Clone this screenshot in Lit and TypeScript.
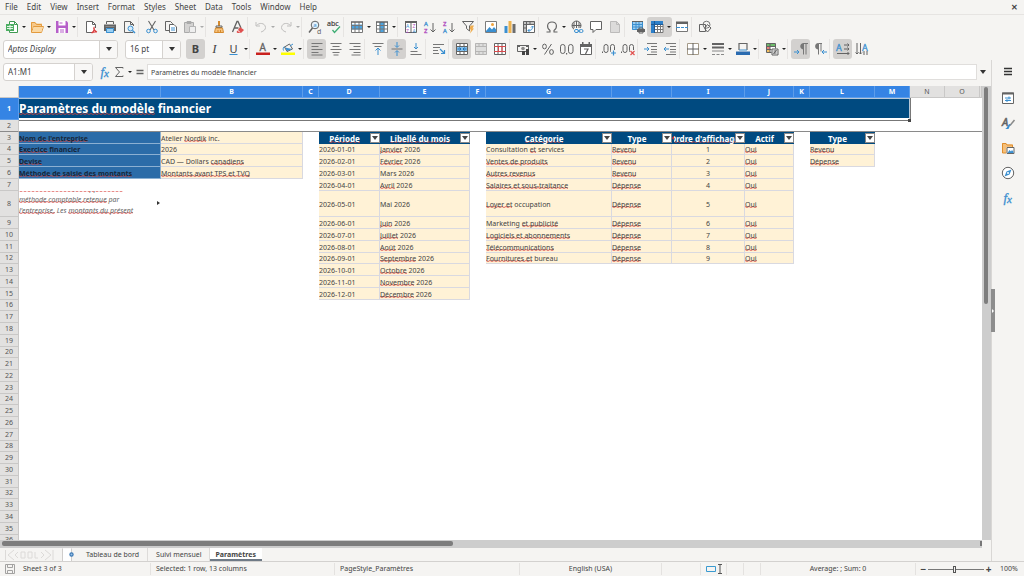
import { LitElement, html, svg, css, nothing } from "lit";
import { customElement, property, state } from "lit/decorators.js";
import { classMap } from "lit/directives/class-map.js";

const K = "#636363";
const B = "#3a8fd0";
const line = (d: string, c = K, w = 1) =>
  svg`<path d=${d} fill="none" stroke=${c} stroke-width=${w} />`;
const fill = (d: string, c = K) => svg`<path d=${d} fill=${c} />`;

const tableGrid = (c = "#777") => svg`${line("M1.5 2v10.500h11V2M1.500 5.500h11M1.500 9h11M5 2v10M9 2v10", c)}`;

const ICONS: Record<string, unknown> = {
  "new": svg`${fill("M4 1h6l3 3v9H4z", "#fff")}${line("M4.500 4V1.500h5l3 3v8h-8V11M9.500 1.500v3h3", "#3f9a52")}${fill("M1 4h8v7H1z", "#4cae62")}${line("M2 6.500h6M2 8.500h6M5 5v5", "#e6f6e9")}`,
  open: svg`${fill("M1 2h4l1.500 1.500H12V7H3l-2 5z", "#f7c98a")}${line("M1.500 12V2.500h3.500l1.500 2h5V6.500M1.500 12.500l2-6h10l-2 6z", "#e39b3e")}${fill("M3.800 7h9l-1.700 5H2.200z", "#fbd9a4")}`,
  save: svg`${fill("M1 1h10.500L13 2.500V13H1z", "#b65fc9")}${fill("M3.500 1h7v4.500h-7zM3.500 8h7v5h-7z", "#fff")}${line("M5 10h4M5 12h4M4.500 3h3", "#b65fc9")}`,
  pdf: svg`${fill("M2.500 1h6l3 3v9h-9z", "#fff")}${line("M8 12.500H2.500v-11h6l3 3V8M8.500 1.500v3h3")}${line("M7.500 13c2-1.500 3-4 2.500-5.500-1 1.500 1.500 4 3 4.500-2-.5-4 0-5.500 1", "#d93a3a", 1.200)}`,
  print: svg`${line("M3.500 4V1.500h7V4")}${fill("M1 4.500h12V11H1z")}${fill("M3 8h8v5H3z", "#9bd0f2")}${line("M3.500 8.500h7v4h-7z", B)}${line("M2.500 6.500h9", "#8a8a8a")}`,
  preview: svg`${line("M11 12.500H2.500v-11h6l3 3V6M8.500 1.500v3h3")}<circle cx="8.500" cy="8.500" r="2.500" fill="#d6ecfb" stroke=${B} />${line("M10.500 10.500l2.500 2.500", B, 1.500)}`,
  cut: svg`${line("M3.500 1l5.500 9M10.500 1L5 10", K, 1.1)}<circle cx="3.500" cy="11" r="1.800" fill="none" stroke=${B} /><circle cx="10.500" cy="11" r="1.800" fill="none" stroke=${B} />`,
  copy: svg`${line("M5 10.500H1.500v-9h5l2 2V4")}${fill("M5 4h5l3 3v6H5z", "#fff")}${line("M5.500 4.500h4.500l2.500 2.500v5.500h-7z")}${line("M7 8h4M7 10h4", B)}`,
  paste: svg`${fill("M1.500 2.500h9v10h-9z", "#d4d3d2")}${line("M1.500 2.500h9v10h-9zM4 1.500h4v2H4z", "#aaa")}${fill("M6 6h7v7H6z", "#eee")}${line("M6.500 6.500h6v6h-6z", "#b4b4b4")}`,
  clone: svg`${line("M7 1v5", "#d58a2e", 2)}${line("M4 7.500V6h6v1.500z")}${fill("M3.500 8h7l1 5h-9z", "#f6c27c")}${line("M3.500 8h7l1 4.500h-9zM6 10v2M8.500 10v2", "#d58a2e")}`,
  clear: svg`${line("M1.500 12L6 1.500h1L10 8M3.500 8h4", K, 1.3)}${fill("M9 7l4 3-3 3H6.500L5.500 12z", "#e0504f")}${line("M6 9.500l3 3", "#fff")}`,
  undo: svg`${line("M2 2v4h4M2.500 5.500C5 2.500 11 2.500 11.500 7.500c0 2-1.500 3.500-4.500 4.500", "#c0bfbe")}`,
  redo: svg`${line("M12 2v4H8M11.500 5.500C9 2.500 3 2.500 2.500 7.500c0 2 1.500 3.500 4.500 4.500", "#c0bfbe")}`,
  find: svg`<circle cx="7" cy="5" r="3.800" fill="#e4f2fc" stroke=${K} />${line("M4.500 8L1 12.500", K, 1.500)}<text x="5.200" y="7" font-size="6" fill=${B}>a</text><text x="9" y="13.500" font-size="7" fill=${K}>d</text>`,
  spell: svg`<text x="0" y="6" font-size="7" fill="#444" stroke="#444" stroke-width=".2">abc</text>${line("M5.500 10l2 2.500L13 6.500", "#3fae75", 1.3)}`,
  row: svg`${fill("M1 2h12v10H1z", "#fff")}${fill("M1 4.500h12v5H1z", "#4ba3e0")}${tableGrid()}${line("M1 2h12", K, 1.500)}`,
  col: svg`${fill("M1 2h12v10H1z", "#fff")}${fill("M4.500 2h5v10h-5z", "#4ba3e0")}${tableGrid()}${line("M1 2h12", K, 1.500)}`,
  sort: svg`${fill("M1 1h12v12H1z", "#fff")}${line("M1.500 1.500h11v11h-11z")}${fill("M1 1h12v2H1z")}<text x="2" y="7.500" font-size="5" fill=${B}>A</text><text x="2" y="12.500" font-size="5" fill="#b04fc0">Z</text><text x="8.500" y="7.500" font-size="5" fill="#b04fc0">Z</text><text x="8.500" y="12.500" font-size="5" fill=${B}>A</text>${line("M7 3v10")}`,
  asc: svg`<text x="1" y="6" font-size="6" fill=${B} stroke=${B} stroke-width=".3">A</text><text x="1" y="13" font-size="6" fill="#b04fc0" stroke="#b04fc0" stroke-width=".3">Z</text>${line("M10 3v9M7.500 9.500L10 12l2.500-2.500")}`,
  desc: svg`<text x="1" y="6" font-size="6" fill="#b04fc0" stroke="#b04fc0" stroke-width=".3">Z</text><text x="1" y="13" font-size="6" fill=${B} stroke=${B} stroke-width=".3">A</text>${line("M10 3v9M7.500 9.500L10 12l2.500-2.500")}`,
  filter: svg`${line("M1.500 1.500h11L8.500 6v5l-3-2.500V6z")}${fill("M9.500 5.500h3.500l-1.500 3h1.500l-4 5 1-4H8.500z", "#f0ad4e")}`,
  image: svg`${fill("M1 1h12v12H1z", "#fff")}${fill("M2 11l3.500-4L8 9.500l2-2.500 2.500 3v2.500H2z", B)}<circle cx="8.500" cy="4.500" r="1.500" fill="#f0a33c" />${line("M1.500 1.500h11v11h-11z", "#7c7c7c")}`,
  chart: svg`${fill("M1.500 6h3V13h-3z", B)}${fill("M5.500 1h3v12h-3z", "#eeb34f")}${fill("M9.500 4h3v9h-3z", "#6d6d6d")}`,
  pivot: svg`${fill("M1 1h12v12H1z", "#fff")}${fill("M1 1h12v3H1zM1 1h3v12H1z", "#c4c4c4")}${line("M1.500 1.500h11v11h-11zM4.500 1v12M1 4.500h12M8 1v3M1 8h3")}${line("M6 10.500c3.500 0 4.500-1 4.500-4M9 7.500l1.500-1.500L12 7.500M7.500 9L6 10.500 7.500 12", B)}`,
  omega: svg`${line("M1.500 12h3.500v-1.500C1.500 8 1.500 2 7 2s5.500 6 2 8.500V12h3.500", K, 1.100)}`,
  globe: svg`<circle cx="6.500" cy="5.500" r="4.500" fill="none" stroke=${K} />${line("M2 5.500h9M6.500 1v9M4 2v7M9 2v7")}${fill("M4 8h10v6H4z", "#f5f4f2")}<rect x="4.500" y="9.500" width="4" height="3" rx="1.500" fill="none" stroke=${B} /><rect x="9" y="9.500" width="4" height="3" rx="1.500" fill="none" stroke=${B} />${line("M7.500 11h3", B)}`,
  comment: svg`${fill("M1 1h12v9H1z", "#fff")}${line("M1.500 1.500h11v8H7L4 12.500v-3H1.500z")}`,
  page: svg`${fill("M2.500 1h6l3 3v9h-9z", "#dcdbda")}${line("M2.500 1.500h6l3 3v8h-9zM8.500 1.500v3h3", "#bcbbba")}`,
  headers: svg`${fill("M1 1h11v9H1z", "#9ccdf0")}${line("M1.500 1.500h10v8h-10zM1 4.500h11M1 7h11M5 1v9M8 1v9", B)}${line("M1 1.500h11")}${fill("M6 9h8v3H6z")}${line("M8 8h4v5H8z")}`,
  freeze: svg`${fill("M4 4h9v9H4z", "#fff")}${fill("M1 1h12v3H1zM1 1h3.500v12H1z", "#2c7fc9")}${line("M4 6.500h9M4 9.500h9M7.500 4v9M10.500 4v9M4 12.500h9V4", "#777")}${line("M1 4.500h12M4.500 1v12", "#1e5a96")}`,
  split: svg`${fill("M1 2h12v10H1z", "#fff")}${line("M1.500 2.500h11v9h-11z", "#777")}${fill("M1 1.500h12v2.500H1z")}${line("M1 7.500h4M6 7.500h3M10 7.500h3", B)}`,
  shapes: svg`${line("M1.500 4.500h6v7h-6zM6.500 8.500L9.500 4.500l3.500 3.500-3.500 4z")}<circle cx="8.500" cy="4.700" r="3.500" fill="none" stroke="#777" />`,
  fontcolor: svg`<text x="3.500" y="9" font-size="10" fill=${K} stroke=${K} stroke-width=".3">A</text>${fill("M0 10.500h14V13H0z", "#c9211e")}`,
  bucket: svg`${line("M3.500 5l5-3 3 5-5.500 2.500z")}${fill("M4 5.500l7 1.500-5 2z", B)}${line("M3.500 4.500C2 5 2 7.500 2.500 8.500M9 4l3-2", B)}${fill("M0 10.500h14V13H0z", "#ffff00")}`,
  left: svg`${line("M1.500 1.500h11M1.500 4.500h7M1.500 7.500h11M1.500 10.500h7M1.500 13h11", "#777")}`,
  center: svg`${line("M1.500 1.500h11M3.500 4.500h7M1.500 7.500h11M3.500 10.500h7M4.500 13h5", "#777")}`,
  right: svg`${line("M1.500 1.500h11M5.500 4.500h7M1.500 7.500h11M5.500 10.500h7M3.500 13h9", "#777")}`,
  top: svg`${line("M1.500 1.500h11M3.500 4.500h7", "#777")}${line("M7 13V6.500M4.500 8.500L7 6l2.500 2.500", B)}`,
  middle: svg`${line("M1.500 7h11", "#777")}${line("M7 0v5M5 3.500l2 2 2-2M7 14V9M5 10.500l2-2 2 2", B)}`,
  bottom: svg`${line("M1.500 9.500h7M1.500 12.500h11", "#777")}${line("M7 1v6M5 5l2 2 2-2", B)}`,
  wrap: svg`${line("M1 2.500h11M1 5.500h7M1 8.500h5M1 11.500h6", "#777")}${line("M8 7l4 4M12.500 8v3.500H9", B, 1.200)}`,
  merge: svg`${fill("M1 1h12v12H1z", "#fff")}${fill("M1 4h12v6H1z", "#86c2ee")}${line("M1.500 1.500h11v11h-11zM1 4.500h12M1 9.500h12M5 1v3M9 1v3M5 10v3M9 10v3")}${line("M2.500 7h3.500M8 7h3.500M4.500 5.500L6 7l-1.500 1.500M9.500 5.500L8 7l1.500 1.500", "#1e6fb5")}`,
  mergeoff: svg`${fill("M1 1h12v12H1z", "#dededd")}${line("M1.500 1.500h11v11h-11zM1 4.500h12M1 9.500h12M5 1v3M9 1v3M5 10v3M9 10v3", "#b6b5b4")}`,
  unmerge: svg`${fill("M1 1h12v12H1z", "#fff")}${line("M1.500 1.500h11v11h-11zM5 1v12M9 1v12")}${line("M1 4.500h12M1 9.500h12M5.500 4v6M9 4v6", "#d8494c")}`,
  currency: svg`${line("M1.500 3.500h11v6h-11z")}${fill("M1 3h3v2H1zM10 3h3v2h-3z")}<circle cx="7" cy="6.500" r="1.800" fill="#8a8a8a" />${fill("M6 9h3v4H6zM10 7h3v6h-3z", "#444")}`,
  percent: svg`${line("M10.500 2L3.500 12.500")}<ellipse cx="3.500" cy="4.500" rx="1.900" ry="2.400" fill="none" stroke=${K} /><ellipse cx="10.500" cy="10" rx="1.900" ry="2.400" fill="none" stroke=${K} />`,
  number: svg`<rect x=".5" y="2.500" width="4.500" height="9" rx="2.200" fill="none" stroke=${K} /><rect x="8.500" y="2.500" width="4.500" height="9" rx="2.200" fill="none" stroke=${K} />${fill("M6 11h1.200v1.500H6z")}`,
  date: svg`${fill("M1 2h12v11H1z", "#fff")}${line("M1.500 2.500h11v10h-11z")}${fill("M1 2h12v3H1zM3 0h1.500v2H3zM9.500 0H11v2H9.500z")}${line("M5 7h4l-2.500 5", K, 1.200)}`,
  decadd: svg`<rect x="2" y="2.500" width="4" height="8" rx="2" fill="none" stroke=${K} /><rect x="8.500" y="2.500" width="4" height="8" rx="2" fill="none" stroke=${K} />${fill("M0 9.500h1V11H0z")}${fill("M9 8h5v6H9z", "#f5f4f2")}${line("M9 11h5M11.500 8.500v5", B, 1.200)}`,
  decdel: svg`<rect x="2" y="2.500" width="4" height="8" rx="2" fill="none" stroke=${K} /><rect x="8.500" y="2.500" width="4" height="8" rx="2" fill="none" stroke=${K} />${fill("M0 9.500h1V11H0z")}${fill("M9 8h5v6H9z", "#f5f4f2")}${line("M9.500 9l4 4M13.500 9l-4 4", "#e0504f", 1.200)}`,
  indent: svg`${line("M3 1.500h10M7 4.500h6M7 7.500h6M7 10h6M3 12.500h10", "#777")}${line("M0 7h5M3 5l2 2-2 2", B)}`,
  outdent: svg`${line("M3 1.500h10M7 4.500h6M7 7.500h6M7 10h6M3 12.500h10", "#777")}${line("M6 7H1M3 5L1 7l2 2", B)}`,
  borders: svg`${fill("M1.500 1.500h11v11h-11z", "#fff")}${line("M1.500 1.500h11v11h-11z", "#a49a88")}${line("M7 1v12M1 7h12")}`,
  bstyle: svg`${line("M1 2h12", K, 2)}${line("M1 5.500h12", K, 2)}${line("M1 9h12", "#888")}${line("M1 12.500h3M5.500 12.500h3M10 12.500h3", "#888")}`,
  bcolor: svg`${line("M3 8V1.500h8V8", "#666", 1.200)}${line("M3 8h8", B)}${fill("M0 9.500h14V13H0z", "#2a6bb0")}`,
  cond: svg`${fill("M1 1h9v9H1z", "#fff")}${fill("M1 1h9v3H1z", "#6dbb6a")}${fill("M1 4h4v3H1z", "#e8817a")}${fill("M1 7h4v3H1z", "#f3c062")}${line("M1.500 1.500h9v9h-9zM1 4.500h10M1 7.500h10M5 1v10")}${fill("M6.500 6.500H13V13H6.500z", "#eee")}${line("M7 7h6v6H7zM8.500 9h3M8.500 11h3M11.500 8l-3 4")}`,
  ltr: svg`${line("M14 1.500H9.500v11M12 1.500v11", "#777")}${fill("M10 1v6.500C5 7.500 5 1 10 1z", "#777")}${line("M0 10h5M3 8l2 2-2 2", B)}`,
  rtl: svg`${line("M9 1.500H5.500v11M8 1.500v8", "#777")}${fill("M5.500 1v6.500C1 7.500 1 1 5.500 1z", "#777")}${line("M14 10H9M11 8L9 10l2 2", B)}`,
  horiz: svg`<text x="0" y="8.500" font-size="9" fill=${B} stroke=${B} stroke-width=".3">A</text>${line("M8 3h5M8 7h5M1 11.500h12M11.500 1.500L13 3l-1.500 1.500M11.500 5.500L13 7l-1.500 1.500M11.500 10l1.500 1.500-1.500 1.500")}`,
  vert: svg`<text x="7" y="8.500" font-size="9" fill=${B} stroke=${B} stroke-width=".3">A</text>${line("M2 1v11M5.500 1v11M9 9v4M12 9v4M.5 10.500L2 12l1.500-1.500M4 10.500L5.500 12 7 10.500")}`,
  fx: svg`<text x="2.500" y="11" font-size="13" font-style="italic" font-family="Liberation Serif, serif" fill=${B} stroke=${B} stroke-width=".3">f</text><text x="6" y="12" font-size="11" font-style="italic" font-family="Liberation Serif, serif" fill=${B} stroke=${B} stroke-width=".3">x</text>`,
  sigma: svg`${line("M11 3.500V2.500H3.500L7.500 7l-4 4.500H11v-1")}`,
  equals: svg`${line("M3.500 5.500h7M3.500 8.500h7", K, 1.300)}`,
  menu: svg`${line("M3 3.500h8M3 6.500h8M3 9.500h8", "#333", 1.300)}`,
  props: svg`${fill("M1 1.500h12v11H1z", "#fff")}${line("M1.500 2h11v10.500h-11z", "#666")}${line("M1 2.500h12", K, 2)}${line("M4 7h6M4 9.500h6M8 5.500v3M6 8v3", B)}`,
  styles: svg`<text x="1" y="10" font-size="11" font-style="italic" fill=${K} stroke=${K} stroke-width=".5">A</text>${line("M13.500 4L9 9.500", "#8a8a8a", 1.500)}${fill("M9.500 8.500l-2 4.500H4c2 0 2.500-4 4.500-5z", B)}`,
  gallery: svg`${fill("M1 2h4l1 1.500h6V12H1z", "#f6bf78")}${line("M1.500 12V2.500h3.500l1 1.500h5.500v2M1.500 12H5", "#df8d2d")}${fill("M5.500 6H13v7H5.500z", "#fff")}${line("M6 6.500h7v6H6z", "#666")}${fill("M6.500 12l2-3 1.500 1.500L11 9l1.500 2v1z", B)}`,
  navigator: svg`<circle cx="7" cy="7" r="5.700" fill="#fff" stroke=${K} />${fill("M10.500 3.500L8.500 8.500l-5 2 2-5z", B)}<circle cx="7" cy="7" r="1" fill="#fff" />`,
  disk: svg`${line("M2.500 2.500h9v9h-9zM4.500 2.500v3h5v-3M4.500 11.500v-3h5v3", "#a3a2a1")}`,
};

const icon = (name: string) =>
  html`<svg class="icon" viewBox="0 0 14 14" aria-hidden="true">${ICONS[name]}</svg>`;

/* "|" separates groups, "*" = has a drop-down, "+" = switched on, "-" = disabled */
const STANDARD = "new* open* save* | pdf print preview | cut copy paste*- | clone clear | undo*- redo*- | find spell | row* col* | sort asc desc filter | image chart pivot | omega* globe comment page- | headers freeze*+ split | shapes";
const FORMATTING = "bold+ italic underline* | fontcolor* bucket* | left+ center right | top middle+ bottom | wrap | merge+ mergeoff- unmerge | currency* percent number date | decadd decdel | indent outdent | borders* bstyle* bcolor* | cond* | ltr+ rtl | horiz+ vert";

const MENUS = ["File", "Edit", "View", "Insert", "Format", "Styles", "Sheet", "Data", "Tools", "Window", "Help"];
const COLS = "ABCDEFGHIJKLMNO".split("");
const WIDTHS = [19, 142, 142, 16, 61, 90, 16, 126, 60, 73, 49, 16, 65, 35, 35, 35];

type Cell = { text: string; kind: string };
const CELLS: Record<string, Cell> = {};
const put = (col: string, from: number, kind: string, texts: string[]) =>
  texts.forEach((text, i) => (CELLS[col + (from + i)] = { text, kind }));

/* words in braces are flagged by the spell checker */
put("A", 3, "label", ["{Nom de l'entreprise}", "{Exercice} financier", "{Devise}", "{Méthode de saisie des montants}"]);
put("B", 3, "value", ["Atelier {Nordik} inc.", "2026", "CAD — Dollars {canadiens}", "{Montants avant TPS et TVQ}"]);
put("A", 8, "note", ["{basée sur modèle, il suppose tous} — la {méthode comptable retenue} par {l'entreprise.} Les {montants du présent}"]);
put("D", 3, "head", ["{Période}"]);
put("D", 4, "value", Array.from({ length: 12 }, (_, i) => `2026-${String(i + 1).padStart(2, "0")}-01`));
put("E", 3, "head", ["{Libellé du mois}"]);
put("E", 4, "value", ["{Janvier} 2026", "{Février} 2026", "Mars 2026", "{Avril} 2026", "Mai 2026", "{Juin} 2026", "{Juillet} 2026", "{Août} 2026", "{Septembre} 2026", "{Octobre} 2026", "{Novembre} 2026", "{Décembre} 2026"]);
put("G", 3, "head", ["{Catégorie}"]);
put("G", 4, "value", ["Consultation {et} services", "{Ventes de produits}", "{Autres revenus}", "{Salaires et sous-traitance}", "{Loyer et} occupation", "Marketing {et publicité}", "{Logiciels et abonnements}", "{Télécommunications}", "{Fournitures et} bureau"]);
put("H", 3, "head", ["Type"]);
put("H", 4, "value", [..."RRRDDDDDD"].map((c) => (c === "R" ? "{Revenu}" : "{Dépense}")));
put("I", 3, "head", ["{Ordre d'affichage}"]);
put("I", 4, "number", [..."123456789"]);
put("J", 3, "head", ["Actif"]);
put("J", 4, "value", Array(9).fill("{Oui}"));
put("L", 3, "head", ["Type"]);
put("L", 4, "value", ["{Revenu}", "{Dépense}"]);

const marked = (text: string) =>
  text.split(/[{}]/).map((part, i) => (i % 2 ? html`<span class="misspelt">${part}</span>` : part));

const shared = css`
  * { box-sizing: border-box; }
  button, input {
    font: inherit;
    color: inherit;
    margin: 0;
    padding: 0;
    border: 0;
    background: none;
    border-radius: 0;
  }
  .icon { width: 14px; height: 14px; display: block; flex: none; overflow: visible; }
`;

@customElement("tool-bar")
class ToolBar extends LitElement {
  @property() items = "";
  static styles = [shared, css`
    :host { display: flex; align-items: center; }
    .sep { width: 4px; height: 20px; border-left: 1px solid #e6e4e2; }
    .tool { display: flex; align-items: center; height: 20px; border-radius: 3px; }
    .tool.on { background: #d3d1cf; }
    .tool button { display: grid; place-items: center; width: 19px; height: 20px; }
    .tool .more { width: 6px; }
    .more::before { content: ""; border: 2px solid transparent; border-top: 2px solid #222; border-bottom: 0; }
    .off .more::before { border-top-color: #aaa; }
    .letter { font-size: 11px; line-height: 14px; color: #444; }
    .bold { font-weight: 700; }
    .italic { font-family: "Liberation Serif", serif; font-style: italic; font-size: 13px; }
    .underline { text-decoration: underline; text-decoration-color: #3a8fd0; }
  `];
  render() {
    return this.items.split(" ").map((item) => {
      if (item === "|") return html`<span class="sep"></span>`;
      const name = item.replace(/[*+-]/g, "");
      const letter = ({ bold: "B", italic: "I", underline: "U" } as Record<string, string>)[name];
      const off = item.endsWith("-");
      return html`<span class=${classMap({ tool: true, on: item.endsWith("+"), off })}>
        <button aria-label=${name} ?disabled=${off}>
          ${letter ? html`<span class="letter ${name}">${letter}</span>` : icon(name)}
        </button>
        ${item.includes("*") ? html`<button class="more" aria-label="${name} options" ?disabled=${off}></button>` : nothing}
      </span>`;
    });
  }
}

@customElement("calc-grid")
class CalcGrid extends LitElement {
  static styles = [shared, css`
    :host { display: block; overflow: hidden; background: #fff; font-size: 7px; line-height: 10px; color: #444; }
    table { width: 100%; table-layout: fixed; border-collapse: separate; border-spacing: 0; }
    th, td { padding: 0; overflow: hidden; white-space: nowrap; text-align: left; vertical-align: middle; font-weight: 400; }
    thead tr { height: 12px; }
    tbody tr { height: 12px; }
    tbody tr.short { height: 11px; }
    tbody tr.title { height: 22px; }
    tbody tr.tall { height: 26px; }
    .axis {
      background: #e2e1e0;
      color: #555;
      text-align: center;
      border-right: 1px solid #c9c8c7;
      border-bottom: 1px solid #c9c8c7;
    }
    .axis.sel { background: #3584e4; color: #fff; font-weight: 700; border-color: #5c9dea; }
    .axis.corner { background: #f5f4f2; }
    .frozen .axis, .frozen td { border-bottom: 1px solid #8a8a8a; }
    .banner {
      position: relative;
      overflow: visible;
      background: #004a80;
      color: #fff;
      font-size: 12px;
      line-height: 16px;
      font-weight: 700;
      border: 1px solid #b8c8d8;
      border-left: 0;
      border-bottom: 2px solid #fff;
      box-shadow: 0 1px 0 #777, 1px 0 0 #777;
    }
    .handle { position: absolute; right: -2px; bottom: -4px; width: 3px; height: 3px; background: #444; }
    .value, .number, .label {
      line-height: 9px;
      padding-top: 1px;
      vertical-align: bottom;
      border-right: 1px solid #d9d9e0;
      border-bottom: 1px solid #d9d9e0;
    }
    .tall .value, .tall .number { vertical-align: middle; }
    .value, .number { background: #fff2d6; }
    .number { text-align: center; }
    .label { background: #2b6ca8; color: #17273a; font-weight: 700; border-color: #8bb0d2; }
    .head { background: #004a80; color: #fff; font-weight: 700; font-size: 8px; }
    .headbox { display: flex; align-items: center; height: 12px; }
    .headtext { flex: 1; display: flex; justify-content: center; overflow: hidden; min-width: 0; padding-top: 1px; }
    .headtext > span { flex: none; }
    .headbox button { flex: none; display: grid; place-items: center; width: 10px; height: 10px; background: #fff; border: 1px solid #888; }
    .headbox button::before { content: ""; border: 3px solid transparent; border-top: 4px solid #444; border-bottom: 0; }
    .cropped .headbox::before { content: ""; border: 2px solid transparent; border-right: 2px solid #e03030; border-left: 0; }
    .notebox {
      display: flex;
      align-items: flex-end;
      height: 26px;
      padding: 0 16px 1px 0;
      overflow: hidden;
      white-space: normal;
      font-style: italic;
      line-height: 11px;
      color: #666;
      position: relative;
    }
    .notebox::after {
      content: "";
      position: absolute;
      right: 1px;
      top: 10px;
      border: 2px solid transparent;
      border-left: 3px solid #333;
      border-right: 0;
    }
    .misspelt {
      background: url("data:image/svg+xml,%3Csvg xmlns='http://www.w3.org/2000/svg' width='4' height='2'%3E%3Cpath d='M0 .5L2 1.500L4 .5' fill='none' stroke='%23d8403c' stroke-opacity='.8'/%3E%3C/svg%3E") 0 calc(100% - 1px) / 4px 2px repeat-x;
    }
    .banner .misspelt { background-position-y: calc(100% - 2px); }
  `];
  private cell(ref: string) {
    const c = CELLS[ref];
    if (!c) return html`<td></td>`;
    if (c.kind === "head")
      return html`<td class=${classMap({ head: true, cropped: c.text.length > 17 })}><div class="headbox"><div class="headtext"><span>${marked(c.text)}</span></div><button aria-label="Filter"></button></div></td>`;
    if (c.kind === "note")
      return html`<td><div class="notebox"><span>${marked(c.text)}</span></div></td>`;
    return html`<td class=${c.kind}>${marked(c.text)}</td>`;
  }
  private row(n: number) {
    const cls = { title: n === 1, frozen: n === 2, tall: n === 8, short: n % 4 === 0 && n !== 8 };
    return html`<tr class=${classMap(cls)}>
      <th scope="row" class=${classMap({ axis: true, sel: n === 1 })}>${n}</th>
      ${n === 1
        ? html`<td class="banner" colspan="13"><span class="misspelt">Paramètres du modèle</span> financier<span class="handle"></span></td><td></td><td></td><td></td>`
        : html`${COLS.map((c) => this.cell(c + n))}<td></td>`}
    </tr>`;
  }
  render() {
    return html`<table>
      <colgroup>${WIDTHS.map((w) => html`<col style="width:${w}px" />`)}<col /></colgroup>
      <thead><tr>
        <td class="axis corner"></td>
        ${COLS.map((c, i) => html`<th scope="col" class=${classMap({ axis: true, sel: i < 13 })}>${c}</th>`)}
        <td class="axis"></td>
      </tr></thead>
      <tbody>${Array.from({ length: 36 }, (_, i) => this.row(i + 1))}</tbody>
    </table>`;
  }
}

@customElement("app-root")
class AppRoot extends LitElement {
  @state() private sheet = "Paramètres";
  static styles = [shared, css`
    :host {
      display: flex;
      flex-direction: column;
      height: 100vh;
      overflow: hidden;
      background: #f5f4f2;
      color: #444;
      font: 7px/10px "Noto Sans", "Open Sans", sans-serif;
    }
    .menubar { display: flex; align-items: center; height: 15px; padding-left: 1px; border-bottom: 1px solid #e6e4e2; }
    .menubar button { font-size: 8px; line-height: 14px; padding: 0 5px 0 4px; }
    .menubar .close { margin-left: auto; padding-right: 6px; font-weight: 700; }
    .standard { height: 23px; padding-left: 2px; }
    .formatting { display: flex; align-items: center; height: 22px; padding-left: 3px; }
    .combo { display: flex; height: 19px; background: #fff; border: 1px solid #d5d2cf; border-radius: 3px; overflow: hidden; font-size: 8px; }
    .combo input { flex: 1; min-width: 0; padding-left: 4px; }
    .combo button { display: grid; place-items: center; width: 18px; background: #f8f7f6; border-left: 1px solid #d5d2cf; }
    .arrow::before { content: ""; border: 3px solid transparent; border-top: 4px solid #333; border-bottom: 0; }
    .font { width: 115px; margin-right: 7px; font-style: italic; }
    .size { width: 56px; margin-right: 5px; }
    .namebox { width: 90px; height: 18px; margin-right: 5px; }
    .main { flex: 1; display: flex; min-height: 0; }
    .work { flex: 1; display: flex; flex-direction: column; min-width: 0; }
    .formula { display: flex; align-items: center; height: 26px; padding: 0 3px 2px; }
    .formula .tool { display: grid; place-items: center; width: 14px; }
    .formula .dot { display: grid; place-items: center; width: 7px; }
    .dot::before { content: ""; border: 2px solid transparent; border-top: 2px solid #222; border-bottom: 0; }
    .formula .text { flex: 1; min-width: 0; height: 16px; background: #fff; border: 1px solid #e0dedc; padding-left: 3px; }
    .formula > .arrow { display: grid; place-items: center; width: 11px; }
    .view { flex: 1; display: flex; min-height: 0; }
    calc-grid { flex: 1; min-width: 0; }
    .vbar { width: 9px; background: #cdcdcd; padding: 1px 3px 0 2px; }
    .vthumb { height: 48%; background: #7d7d7d; border-radius: 2px; }
    .hbar { display: flex; justify-content: space-between; height: 8px; margin-right: 9px; background: #cdcdcd; padding: 1px 0 2px 2px; }
    .hthumb { width: 46%; background: #7d7d7d; border-radius: 2px; }
    .hgrip { width: 2px; background: #777; }
    .tabs { display: flex; align-items: center; height: 13px; }
    .nav { display: flex; width: 54px; padding-left: 4px; }
    .faint { width: 50px; height: 12px; }
    .add { width: 24px; padding-left: 6px; display: grid; place-items: center; }
    .tabs .tab { height: 13px; padding: 0 8px; border-right: 1px solid #dddbd9; }
    .tabs .tab.current { background: #fff; font-weight: 700; padding: 0 6px 0 5px; border-right: 0; box-shadow: inset 0 -2px 0 #6f7a86; }
    .sidebar { position: relative; width: 33px; border-left: 1px solid #d9d7d5; display: flex; flex-direction: column; align-items: center; gap: 11px; padding-top: 5px; }
    .sidebar button { height: 14px; }
    .sidebar .first { margin-bottom: 1px; }
    .grip { position: absolute; left: -1px; top: 229px; width: 4px; height: 43px; background: #8d8d8d; display: grid; place-items: center; }
    .grip::before { content: ""; border: 2px solid transparent; border-left: 2px solid #fff; border-right: 0; }
    .status {
      display: grid;
      grid-template-columns: 150px 184px 185fr 142fr 39px 26px 17px 17px 155fr 109px;
      align-items: center;
      height: 15px;
      border-top: 1px solid #d3d1cf;
    }
    .status > div { display: flex; align-items: center; height: 12px; padding-left: 5px; border-left: 1px solid #e4e2e0; white-space: nowrap; }
    .status > div:first-child { padding-left: 3px; gap: 6px; border-left: 0; }
    .status > .mid { justify-content: center; padding: 0; }
    .status > .zoom { padding-left: 3px; }
    .zoom button { font-size: 10px; width: 9px; font-weight: 700; line-height: 10px; }
    .zoom label { margin-left: 7px; }
    .zoom input { appearance: none; width: 56px; height: 9px; background: linear-gradient(#777, #777) center / 100% 1px no-repeat; }
    .zoom input::-webkit-slider-thumb { appearance: none; width: 3px; height: 7px; background: #f5f4f2; border: 1px solid #555; }
    .mode { width: 18px; height: 12px; }
  `];
  render() {
    return html`
      <nav class="menubar">
        ${MENUS.map((m) => html`<button>${m}</button>`)}
        <button class="close" aria-label="Close">✕</button>
      </nav>
      <tool-bar class="standard" .items=${STANDARD}></tool-bar>
      <div class="formatting">
        <div class="combo font"><input aria-label="Font name" .value=${"Aptos Display"} /><button class="arrow" aria-label="Fonts"></button></div>
        <div class="combo size"><input aria-label="Font size" .value=${"16 pt"} /><button class="arrow" aria-label="Sizes"></button></div>
        <tool-bar .items=${FORMATTING}></tool-bar>
      </div>
      <div class="main">
        <div class="work">
          <div class="formula">
            <div class="combo namebox"><input aria-label="Name box" .value=${"A1:M1"} /><button class="arrow" aria-label="Names"></button></div>
            <button class="tool" aria-label="Function wizard">${icon("fx")}</button>
            <button class="tool" aria-label="Sum">${icon("sigma")}</button>
            <button class="dot" aria-label="Sum options"></button>
            <button class="tool" aria-label="Formula">${icon("equals")}</button>
            <input class="text" aria-label="Formula bar" .value=${"Paramètres du modèle financier"} />
            <button class="arrow" aria-label="Expand"></button>
          </div>
          <div class="view">
            <calc-grid></calc-grid>
            <div class="vbar"><div class="vthumb"></div></div>
          </div>
          <div class="hbar"><div class="hthumb"></div><div class="hgrip"></div></div>
          <div class="tabs">
            <div class="nav"><svg class="faint" viewBox="0 0 50 12" fill="none" stroke="#dcdad8">
              <path d="M1.500 1v10M10 1L4 6l6 5M14 3l-3 3 3 3M17 3v6h4V3zM24 3v6h4V3zM31 3v6h3M37 3l3 3-3 3M41 1l6 5-6 5M49 1v10" />
            </svg></div>
            <button class="add" aria-label="Add sheet"><svg class="icon" viewBox="0 0 14 14">
              <path d="M.5 .5v13h9V.5" fill="#fff" stroke="#cfcdcb" /><circle cx="9.500" cy="6.500" r="1.600" fill="#9cc3e6" stroke="#3a78b5" stroke-width="1.200" />
            </svg></button>
            ${["Tableau de bord", "Suivi mensuel", "Paramètres"].map((t) => html`
              <button class=${classMap({ tab: true, current: t === this.sheet })} @click=${() => (this.sheet = t)}>${t}</button>`)}
          </div>
        </div>
        <aside class="sidebar">
          <button class="first" aria-label="Sidebar settings">${icon("menu")}</button>
          ${["props", "styles", "gallery", "navigator", "fx"].map((n) => html`<button aria-label=${n}>${icon(n)}</button>`)}
          <div class="grip"></div>
        </aside>
      </div>
      <footer class="status">
        <div>${icon("disk")}<span>Sheet 3 of 3</span></div>
        <div>Selected: 1 row, 13 columns</div>
        <div>PageStyle_Paramètres</div>
        <div class="mid">English (USA)</div>
        <div></div>
        <div><svg class="mode" viewBox="0 0 18 12" fill="none"><path d="M.5 3.500h9v5h-9z" stroke="#3a9ad0" /><path d="M12 1.500h4M14 1.500v9M12 10.500h4" stroke="#555" /></svg></div>
        <div></div>
        <div></div>
        <div class="mid">Average: ; Sum: 0</div>
        <div class="zoom">
          <button aria-label="Zoom out">−</button>
          <input id="zoom" type="range" min="0" max="200" .value=${"96"} />
          <button aria-label="Zoom in">+</button>
          <label for="zoom">100%</label>
        </div>
      </footer>
    `;
  }
}
